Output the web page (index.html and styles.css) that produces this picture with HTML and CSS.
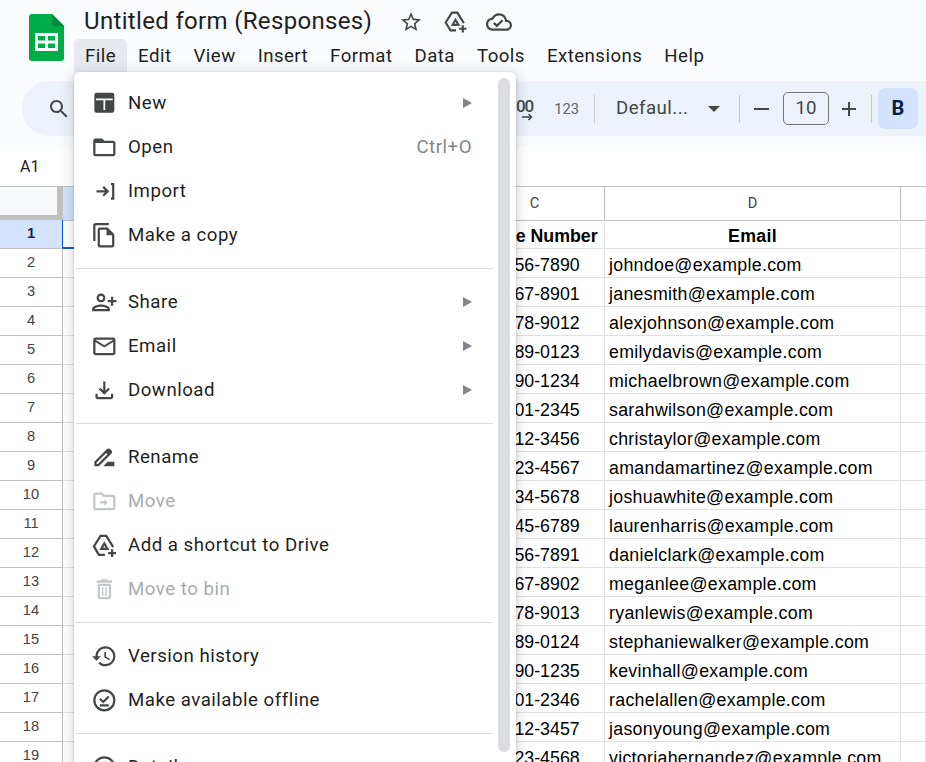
FILE: index.html
```html
<!DOCTYPE html>
<html lang="en">
<head>
  <meta charset="UTF-8">
  <meta name="viewport" content="width=device-width, initial-scale=1.0">
  <title>Untitled form (Responses)</title>
  <link rel="stylesheet" href="styles.css">
</head>
<body>
  <div class="app">
    <header class="top">
      <svg class="logo" viewBox="0 0 35 47" aria-hidden="true">
        <path d="M3 0H23L35 12V44a3 3 0 0 1-3 3H3a3 3 0 0 1-3-3V3a3 3 0 0 1 3-3z" fill="#00ac47"/>
        <path d="M23 0L35 12H26a3 3 0 0 1-3-3z" fill="#008a39"/>
        <path d="M6 19H29V37H6zM9 22V26.5H16V22zM19 22V26.5H26V22zM9 29.5V34H16V29.5zM19 29.5V34H26V29.5z" fill="#fff" fill-rule="evenodd"/>
      </svg>
      <div class="doc">
        <div class="title-row">
          <span class="doc-title">Untitled form (Responses)</span>
          <svg class="ic star" viewBox="0 0 24 24"><path d="M22 9.24l-7.19-.62L12 2 9.19 8.63 2 9.24l5.46 4.73L5.82 21 12 17.27 18.18 21l-1.63-7.03L22 9.24zM12 15.4l-3.76 2.27 1-4.28-3.32-2.88 4.38-.38L12 6.1l1.71 4.04 4.38.38-3.32 2.88 1 4.28L12 15.4z"/></svg>
          <svg class="ic drive" viewBox="0 0 24 24"><path class="line" d="M12.5 20.5H7.2L2.6 13 8.6 3.5h5.2L20 13.6M9.2 15.2h5.6L12 10.4z"/><path class="line" d="M19 15.5v7M15.5 19h7"/></svg>
          <svg class="ic cloud" viewBox="0 0 24 24"><path d="M19.35 10.04C18.67 6.59 15.64 4 12 4 9.11 4 6.6 5.64 5.35 8.04 2.34 8.36 0 10.91 0 14c0 3.31 2.69 6 6 6h13c2.76 0 5-2.24 5-5 0-2.64-2.05-4.78-4.65-4.96zM19 18H6c-2.21 0-4-1.79-4-4 0-2.05 1.53-3.76 3.56-3.97l1.07-.11.5-.95C8.08 7.14 9.94 6 12 6c2.62 0 4.88 1.86 5.39 4.43l.3 1.5 1.53.11c1.56.1 2.78 1.41 2.78 2.96 0 1.65-1.35 3-3 3zm-9-3.82l-2.09-2.09L6.5 13.5 10 17l6.01-6.01-1.41-1.41z"/></svg>
        </div>
        <nav class="menubar">
          <span class="mb-item open">File</span>
          <span class="mb-item">Edit</span>
          <span class="mb-item">View</span>
          <span class="mb-item">Insert</span>
          <span class="mb-item">Format</span>
          <span class="mb-item">Data</span>
          <span class="mb-item">Tools</span>
          <span class="mb-item">Extensions</span>
          <span class="mb-item">Help</span>
        </nav>
      </div>
    </header>

    <div class="toolbar-wrap">
      <div class="toolbar">
        <svg class="ic search" viewBox="0 0 24 24"><path d="M15.5 14h-.79l-.28-.27C15.41 12.59 16 11.11 16 9.5 16 5.91 13.09 3 9.5 3S3 5.91 3 9.5 5.91 16 9.5 16c1.61 0 3.09-.59 4.23-1.57l.27.28v.79l5 4.99L20.49 19l-4.99-5zm-6 0C7.01 14 5 11.99 5 9.5S7.01 5 9.5 5 14 7.01 14 9.5 11.99 14 9.5 14z"/></svg>
        <div class="tools">
          <div class="dec">
            <span class="dec-num">00</span>
            <svg viewBox="0 0 12 8"><path d="M0 4h9M6.5 1l3 3-3 3" class="line"/></svg>
          </div>
          <span class="fmt">123</span>
          <i class="sep"></i>
          <div class="font-sel"><span>Defaul...</span><b class="caret"></b></div>
          <i class="sep"></i>
          <span class="minus"></span>
          <span class="size">10</span>
          <svg class="ic plus" viewBox="0 0 24 24"><path d="M19 13h-6v6h-2v-6H5v-2h6V5h2v6h6v2z"/></svg>
          <i class="sep"></i>
          <span class="bold-btn">B</span>
        </div>
      </div>
    </div>

    <div class="formula"><span class="cell-name">A1</span></div>

    <div class="sheet">
      <div class="row head">
        <span class="corner"></span>
        <span class="ch sel"></span><span class="ch"></span><span class="ch">C</span><span class="ch">D</span><span class="ch last"></span>
      </div>
      <div class="row">
        <span class="rh sel">1</span><span class="c active"></span><span class="c"></span><span class="c th">Phone Number</span><span class="c th">Email</span><span class="c"></span>
      </div>
      <div class="row"><span class="rh">2</span><span class="c"></span><span class="c"></span><span class="c">123-456-7890</span><span class="c">johndoe@example.com</span><span class="c"></span></div>
      <div class="row"><span class="rh">3</span><span class="c"></span><span class="c"></span><span class="c">234-567-8901</span><span class="c">janesmith@example.com</span><span class="c"></span></div>
      <div class="row"><span class="rh">4</span><span class="c"></span><span class="c"></span><span class="c">345-678-9012</span><span class="c">alexjohnson@example.com</span><span class="c"></span></div>
      <div class="row"><span class="rh">5</span><span class="c"></span><span class="c"></span><span class="c">456-789-0123</span><span class="c">emilydavis@example.com</span><span class="c"></span></div>
      <div class="row"><span class="rh">6</span><span class="c"></span><span class="c"></span><span class="c">567-890-1234</span><span class="c">michaelbrown@example.com</span><span class="c"></span></div>
      <div class="row"><span class="rh">7</span><span class="c"></span><span class="c"></span><span class="c">678-901-2345</span><span class="c">sarahwilson@example.com</span><span class="c"></span></div>
      <div class="row"><span class="rh">8</span><span class="c"></span><span class="c"></span><span class="c">789-012-3456</span><span class="c">christaylor@example.com</span><span class="c"></span></div>
      <div class="row"><span class="rh">9</span><span class="c"></span><span class="c"></span><span class="c">890-123-4567</span><span class="c">amandamartinez@example.com</span><span class="c"></span></div>
      <div class="row"><span class="rh">10</span><span class="c"></span><span class="c"></span><span class="c">901-234-5678</span><span class="c">joshuawhite@example.com</span><span class="c"></span></div>
      <div class="row"><span class="rh">11</span><span class="c"></span><span class="c"></span><span class="c">012-345-6789</span><span class="c">laurenharris@example.com</span><span class="c"></span></div>
      <div class="row"><span class="rh">12</span><span class="c"></span><span class="c"></span><span class="c">123-456-7891</span><span class="c">danielclark@example.com</span><span class="c"></span></div>
      <div class="row"><span class="rh">13</span><span class="c"></span><span class="c"></span><span class="c">234-567-8902</span><span class="c">meganlee@example.com</span><span class="c"></span></div>
      <div class="row"><span class="rh">14</span><span class="c"></span><span class="c"></span><span class="c">345-678-9013</span><span class="c">ryanlewis@example.com</span><span class="c"></span></div>
      <div class="row"><span class="rh">15</span><span class="c"></span><span class="c"></span><span class="c">456-789-0124</span><span class="c">stephaniewalker@example.com</span><span class="c"></span></div>
      <div class="row"><span class="rh">16</span><span class="c"></span><span class="c"></span><span class="c">567-890-1235</span><span class="c">kevinhall@example.com</span><span class="c"></span></div>
      <div class="row"><span class="rh">17</span><span class="c"></span><span class="c"></span><span class="c">678-901-2346</span><span class="c">rachelallen@example.com</span><span class="c"></span></div>
      <div class="row"><span class="rh">18</span><span class="c"></span><span class="c"></span><span class="c">789-012-3457</span><span class="c">jasonyoung@example.com</span><span class="c"></span></div>
      <div class="row"><span class="rh">19</span><span class="c"></span><span class="c"></span><span class="c">890-123-4568</span><span class="c">victoriahernandez@example.com</span><span class="c"></span></div>
    </div>

    <!-- file menu, open over the sheet -->
    <div class="file-menu">
      <div class="m-scroll"></div>
      <div class="m-item">
        <svg class="ic" viewBox="0 0 24 24"><rect x="3" y="2.500" width="18" height="18" rx="2"/><path d="M4.500 8.500H19.500M12 8.500V18" class="line white"/></svg>
        <span class="m-label">New</span><b class="m-arrow"></b>
      </div>
      <div class="m-item">
        <svg class="ic" viewBox="0 0 24 24"><path d="M20 6h-8l-2-2H4c-1.100 0-1.990.9-1.990 2L2 18c0 1.100.9 2 2 2h16c1.100 0 2-.9 2-2V8c0-1.100-.9-2-2-2zm0 12H4V8h16v10z"/></svg>
        <span class="m-label">Open</span><span class="m-key">Ctrl+O</span>
      </div>
      <div class="m-item">
        <svg class="ic" viewBox="0 0 24 24"><path class="line" d="M5 12H15M11 8l4 4-4 4M18 5.500h2v13h-2"/></svg>
        <span class="m-label">Import</span>
      </div>
      <div class="m-item">
        <svg class="ic" viewBox="0 0 24 24"><path d="M16 1H4c-1.100 0-2 .9-2 2v14h2V3h12V1zm-1 4H8c-1.100 0-1.990.9-1.990 2L6 21c0 1.100.89 2 1.990 2H19c1.100 0 2-.9 2-2V11l-6-6zM8 21V7h6v5h5v9H8z"/></svg>
        <span class="m-label">Make a copy</span>
      </div>
      <hr class="m-sep">
      <div class="m-item">
        <svg class="ic" viewBox="0 0 24 24"><path transform="matrix(-1 0 0 1 24 0)" d="M15 12c2.210 0 4-1.790 4-4s-1.790-4-4-4-4 1.790-4 4 1.790 4 4 4zm0-6c1.100 0 2 .9 2 2s-.9 2-2 2-2-.9-2-2 .9-2 2-2zm0 8c-2.670 0-8 1.340-8 4v2h16v-2c0-2.660-5.330-4-8-4zm-6 4c.22-.72 3.310-2 6-2 2.700 0 5.800 1.290 6 2H9zm-3-3v-3h3v-2H6V7H4v3H1v2h3v3h2z"/></svg>
        <span class="m-label">Share</span><b class="m-arrow"></b>
      </div>
      <div class="m-item">
        <svg class="ic" viewBox="0 0 24 24"><path d="M20 4H4c-1.100 0-1.990.9-1.990 2L2 18c0 1.100.9 2 2 2h16c1.100 0 2-.9 2-2V6c0-1.100-.9-2-2-2zm0 14H4V8l8 5 8-5v10zm-8-7L4 6h16l-8 5z"/></svg>
        <span class="m-label">Email</span><b class="m-arrow"></b>
      </div>
      <div class="m-item">
        <svg class="ic" viewBox="0 0 24 24"><path d="M18 15v3H6v-3H4v3c0 1.100.9 2 2 2h12c1.100 0 2-.9 2-2v-3h-2zm-1-4l-1.410-1.410L13 12.170V4h-2v8.170L8.410 9.590 7 11l5 5 5-5z"/></svg>
        <span class="m-label">Download</span><b class="m-arrow"></b>
      </div>
      <hr class="m-sep">
      <div class="m-item">
        <svg class="ic" viewBox="0 0 24 24"><path d="M18.410 5.800L17.200 4.590c-.78-.78-2.050-.78-2.830 0l-2.680 2.680L3 15.960V20h4.040l8.740-8.740 2.630-2.630c.79-.78.79-2.050 0-2.830zM6.210 18H5v-1.210l8.660-8.660 1.210 1.210L6.210 18zM11 20l4-4h6v4H11z"/></svg>
        <span class="m-label">Rename</span>
      </div>
      <div class="m-item off">
        <svg class="ic" viewBox="0 0 24 24"><path d="M20 6h-8l-2-2H4c-1.100 0-1.990.9-1.990 2L2 18c0 1.100.9 2 2 2h16c1.100 0 2-.9 2-2V8c0-1.100-.9-2-2-2zm0 12H4V6h5.170l2 2H20v10zm-8-4H8v-2h4v-2l3 3-3 3v-2z"/></svg>
        <span class="m-label">Move</span>
      </div>
      <div class="m-item">
        <svg class="ic" viewBox="0 0 24 24"><path class="line" d="M12.500 20.500H7.200L2.600 13 8.600 3.500h5.200L20 13.600M9.200 15.200h5.600L12 10.400z"/><path class="line" d="M19 15.500v7M15.500 19h7"/></svg>
        <span class="m-label">Add a shortcut to Drive</span>
      </div>
      <div class="m-item off">
        <svg class="ic" viewBox="0 0 24 24"><path d="M16 9v10H8V9h8m-1.500-6h-5l-1 1H5v2h14V4h-3.500l-1-1zM18 7H6v12c0 1.100.9 2 2 2h8c1.100 0 2-.9 2-2V7z"/><path d="M10.500 10v8M13.500 10v8" class="line thin"/></svg>
        <span class="m-label">Move to bin</span>
      </div>
      <hr class="m-sep">
      <div class="m-item">
        <svg class="ic" viewBox="0 0 24 24"><path d="M13 3c-4.970 0-9 4.030-9 9H1l3.890 3.890.07.14L9 12H6c0-3.870 3.130-7 7-7s7 3.130 7 7-3.130 7-7 7c-1.930 0-3.680-.79-4.940-2.060l-1.420 1.420C8.270 19.990 10.510 21 13 21c4.970 0 9-4.030 9-9s-4.030-9-9-9zm-1 5v5l4.280 2.540.72-1.210-3.500-2.080V8H12z"/></svg>
        <span class="m-label">Version history</span>
      </div>
      <div class="m-item">
        <svg class="ic" viewBox="0 0 24 24"><circle class="line" cx="12" cy="12" r="9"/><path class="line" d="M8 10.500l3 3 5-5M8 16.500h8"/></svg>
        <span class="m-label">Make available offline</span>
      </div>
      <hr class="m-sep">
      <div class="m-item">
        <svg class="ic" viewBox="0 0 24 24"><circle class="line" cx="12" cy="12" r="9"/><path class="line" d="M12 11v6M12 7v2"/></svg>
        <span class="m-label">Details</span>
      </div>
    </div>
  </div>
</body>
</html>
```

FILE: styles.css
```css
* {
  box-sizing: border-box;
}

body {
  margin: 0;
  font-family: Roboto, "Liberation Sans", sans-serif;
  color: #1f1f1f;
  background: #fff;
}

.app {
  position: relative;
  height: 762px;
  overflow: hidden;
}

.ic {
  width: 24px;
  height: 24px;
  flex: none;
  fill: #444746;
}

.line {
  fill: none;
  stroke: #444746;
  stroke-width: 2;
}

.line.white {
  stroke: #fff;
  stroke-width: 1.6;
}

.line.thin {
  stroke-width: 1.3;
}

/* header */
.top {
  display: flex;
  height: 81px;
  background: #f9fbfd;
  padding-left: 29px;
}

.logo {
  width: 35px;
  height: 47px;
  margin-top: 14px;
  flex: none;
}

.doc {
  margin-left: 10px;
}

.title-row {
  display: flex;
  align-items: center;
  height: 39px;
  padding-left: 10px;
  padding-top: 4px;
}

.doc-title {
  font-size: 24px;
  letter-spacing: 0.33px;
  white-space: nowrap;
  line-height: 32px;
  margin-top: -1px;
}

.star { margin-left: 27px; }
.drive { margin-left: 20px; width: 25px; height: 25px; }
.cloud { margin-left: 18px; width: 26px; height: 26px; }

.menubar {
  display: flex;
  height: 33px;
}

.mb-item {
  padding: 0 11px;
  font-size: 18.67px;
  letter-spacing: 0.45px;
  line-height: 34px;
  color: #1f1f1f;
  border-radius: 5px 5px 0 0;
}

.mb-item.open {
  background: #e6e9ee;
}

/* toolbar */
.toolbar-wrap {
  height: 66px;
  padding-left: 22px;
  background: #f9fbfd;
}

.toolbar {
  display: flex;
  align-items: center;
  height: 55px;
  padding: 0 8px 0 25px;
  background: #edf2fa;
  border-radius: 27px 0 0 27px;
}

.tools {
  display: flex;
  align-items: center;
  margin-left: auto;
  color: #444746;
}

.dec {
  display: flex;
  flex-direction: column;
  align-items: flex-end;
  width: 24px;
  margin-top: 2px;
}

.dec-num {
  font-size: 17px;
  font-weight: 500;
  letter-spacing: -1px;
  line-height: 14px;
}

.dec svg {
  width: 12px;
  height: 8px;
  margin-right: -1px;
}

.dec .line {
  stroke-width: 1.500;
}

.fmt {
  margin-left: 21px;
  font-size: 14.67px;
  color: #5f6368;
}

.sep {
  width: 1px;
  height: 28px;
  background: #c7c7c7;
}

.fmt + .sep {
  margin-left: 15px;
}

.font-sel {
  display: flex;
  align-items: center;
  width: 144px;
  margin-top: -2px;
  padding: 0 21px;
  font-size: 18.67px;
  letter-spacing: 0.45px;
}

.caret {
  margin-top: 2px;
  margin-left: auto;
  margin-right: -2px;
  border: 6px solid transparent;
  border-top-color: #444746;
  border-bottom: 0;
}

.minus {
  width: 15px;
  height: 2px;
  margin-left: 14px;
  background: #444746;
}

.size {
  width: 46px;
  height: 33px;
  margin-left: 14px;
  border: 1px solid #747775;
  border-radius: 5px;
  font-size: 18.67px;
  line-height: 31px;
  text-align: center;
}

.plus {
  margin-left: 8px;
}

.plus + .sep {
  margin-left: 10px;
}

.bold-btn {
  width: 40px;
  height: 41px;
  margin-left: 6px;
  border-radius: 7px;
  background: #d3e3fd;
  color: #041e49;
  font-size: 20px;
  font-weight: 700;
  line-height: 41px;
  text-align: center;
}

/* formula bar */
.formula {
  display: flex;
  align-items: center;
  height: 39px;
  padding-left: 20px;
  background: #fff;
}

.cell-name {
  font-size: 16px;
}

/* grid */
.row {
  display: grid;
  grid-template-columns: 63px 201px 201px 140px 296px 25px;
  height: 29px;
}

.row.head {
  height: 34px;
  border-top: 1px solid #c0c0c0;
}

.corner {
  background: #f8f9fa;
  border-right: 6px solid #c0c0c0;
  border-bottom: 6px solid #c0c0c0;
}

.ch {
  display: block;
  border-right: 1px solid #c0c0c0;
  border-bottom: 1px solid #c0c0c0;
  font-size: 14.67px;
  line-height: 33px;
  text-align: center;
  color: #444;
}

.ch.sel {
  background: #d3e3fd;
}

.ch.last {
  border-right: 0;
}

.rh {
  border-right: 1px solid #c0c0c0;
  border-bottom: 1px solid #c0c0c0;
  font-family: "Liberation Sans", sans-serif;
  font-size: 14.67px;
  line-height: 27px;
  text-align: center;
  color: #444;
}

.rh.sel {
  background: #d3e3fd;
  color: #0b2a5e;
  font-weight: 700;
  border-right-color: #0b57d0;
}

.c {
  overflow: hidden;
  padding: 0 4px;
  border-right: 1px solid #e1e1e1;
  border-bottom: 1px solid #e1e1e1;
  font-family: "Liberation Sans", sans-serif;
  font-size: 17.78px;
  line-height: 32px;
  white-space: nowrap;
  color: #000;
}

/* the email column renders a touch wider than the phone digits */
.c:nth-child(5) {
  letter-spacing: 0.3px;
}

.c.th {
  font-weight: 700;
  text-align: center;
}

.c.active {
  border-bottom: 2px solid #0b57d0;
}

/* file menu */
.file-menu {
  position: absolute;
  left: 74px;
  top: 72px;
  width: 442px;
  height: 720px;
  padding-top: 9px;
  background: #fff;
  border-radius: 6px;
  box-shadow: 0 3px 12px 3px rgba(60, 64, 67, 0.16), 0 1px 3px rgba(60, 64, 67, 0.25);
}

.m-scroll {
  position: absolute;
  left: 424px;
  top: 6px;
  width: 12px;
  height: 674px;
  background: #dadce0;
  border-radius: 6px;
}

.m-item {
  display: flex;
  align-items: center;
  height: 44px;
  padding: 0 44px 0 17px;
}

.m-item .ic {
  width: 26.67px;
  height: 26.67px;
}

.m-label {
  margin-left: 10.33px;
  font-size: 18.67px;
  letter-spacing: 0.5px;
  white-space: nowrap;
}

.m-item.off .m-label {
  color: #a8abaf;
}

.m-item.off .ic {
  fill: #c4c7c9;
}

.m-item.off .line {
  stroke: #c4c7c9;
}

.m-key {
  margin-left: auto;
  font-size: 18.67px;
  letter-spacing: 0.5px;
  color: #80868b;
}

.m-arrow {
  margin-left: auto;
  border: 5px solid transparent;
  border-left: 9px solid #80868b;
  border-right: 0;
}

.m-sep {
  height: 1px;
  width: 418px;
  margin: 11px 0 11px 1px;
  border: 0;
  background: #dadce0;
}
```
